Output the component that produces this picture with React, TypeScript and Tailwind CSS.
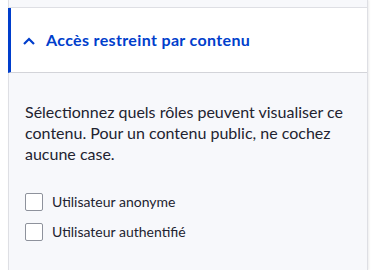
import React from "react";

export default function App() {
  return (
    <div className="w-[377px] h-[270px] bg-white overflow-hidden" style={{ fontFamily: 'Lato, "Noto Sans", sans-serif' }}>
      <div className="ml-2 w-[360px] h-full bg-[#f7f8fb] border-x border-[#dedfe4] shadow-[1px_0_2px_rgba(0,0,0,0.08)] flex flex-col">
        <div className="h-2 border-b border-[#dedfe4]" />
        <div className="h-[65px] bg-white border-l-[3px] border-[#003ecc] border-b border-b-[#d3d4d9] -ml-px flex items-center pl-[11px] gap-[10px] text-[#003ecc]">
          <svg width="14" height="10" viewBox="0 0 14 10" className="mt-[1px]">
            <path d="M2 8 L7 3 L12 8" fill="none" stroke="#003ecc" strokeWidth="2.2" />
          </svg>
          <span className="text-[16px] font-bold tracking-[0.35px]">Accès restreint par contenu</span>
        </div>
        <div className="px-4 pt-[28px] text-[#222330]">
          <p className="text-[16px] leading-[21px] pr-2">
            Sélectionnez quels rôles peuvent visualiser ce contenu. Pour un contenu public, ne cochez aucune case.
          </p>
          <div className="mt-[28px] flex flex-col gap-[10px]">
            <label className="flex items-center gap-[9px] text-[14px] leading-[20px]">
              <span className="w-[18px] h-[18px] border border-[#8e929c] rounded-[2px] bg-white" />
              Utilisateur anonyme
            </label>
            <label className="flex items-center gap-[9px] text-[14px] leading-[20px]">
              <span className="w-[18px] h-[18px] border border-[#8e929c] rounded-[2px] bg-white" />
              Utilisateur authentifié
            </label>
          </div>
        </div>
      </div>
    </div>
  );
}
